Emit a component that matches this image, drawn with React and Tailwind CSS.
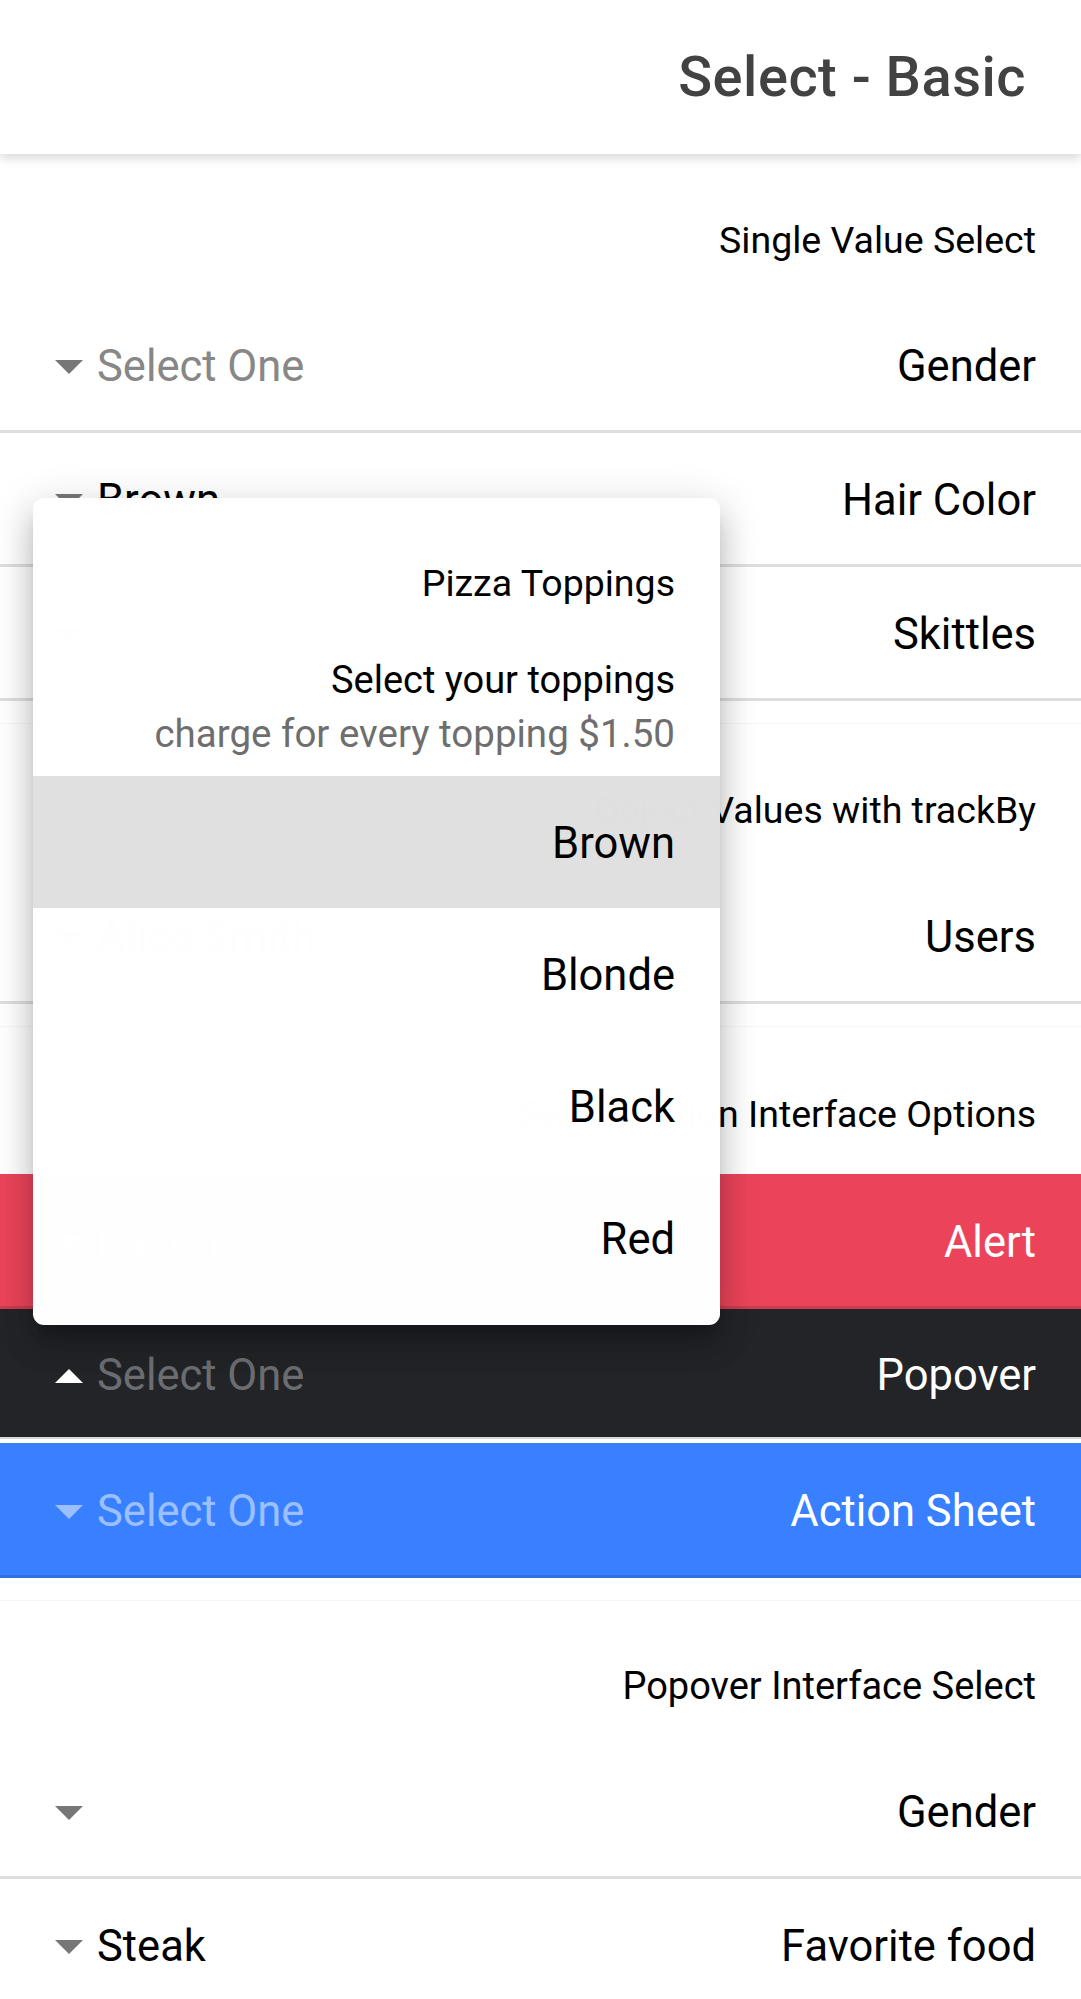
import React from 'react';

const Arrow = ({ up = false, color = '#777777' }) => (
  <svg width="28" height="14" viewBox="0 0 28 14" className="shrink-0">
    <polygon points={up ? '0,14 28,14 14,0' : '0,0 28,0 14,14'} fill={color} />
  </svg>
);

const ListHeader = ({ children, h = 'h-[123px]', size = 'text-[37.5px]' }) => (
  <div className={`${h} ${size} flex items-center justify-end pt-[5px] pr-[45px] text-black`}>
    {children}
  </div>
);

const Row = ({ label, value, placeholder, arrowColor = '#777777' }) => (
  <div className="h-[134px] flex items-center justify-between pt-[5px] pl-[55px] pr-[45px] border-b-[3px] border-[#dedede] text-[43.5px]">
    <div className="flex items-center gap-[14px]">
      <Arrow color={arrowColor} />
      {value && <span className="text-black">{value}</span>}
      {placeholder && <span className="text-[#878787]">{placeholder}</span>}
    </div>
    <span className="text-black">{label}</span>
  </div>
);

const options = ['Brown', 'Blonde', 'Black', 'Red'];

export default function App() {
  return (
    <div className="relative w-full h-[1999px] overflow-hidden bg-white font-['Roboto',sans-serif]">
      {/* Toolbar */}
      <div className="relative z-10 h-[154px] bg-white flex items-center justify-end pr-[55px] shadow-[0_4px_10px_rgba(0,0,0,0.16)]">
        <h1 className="text-[56px] font-medium text-[#424242] tracking-[0.5px]">Select - Basic</h1>
      </div>

      {/* Single value */}
      <div className="pt-[22px] pb-[22px]">
        <ListHeader>Single Value Select</ListHeader>
        <Row label="Gender" placeholder="Select One" />
        <Row label="Hair Color" value="Brown" />
        <Row label="Skittles" />
      </div>

      {/* Objects */}
      <div className="border-t border-[#f7f7f7] pt-[22px] pb-[22px]">
        <ListHeader h="h-[124px]">Object Values with trackBy</ListHeader>
        <Row label="Users" value="Alice Smith" />
      </div>

      {/* Custom interface */}
      <div className="border-t border-[#f7f7f7] pt-[22px] pb-[22px]">
        <ListHeader h="h-[125px]">Select Action Interface Options</ListHeader>
        <div className="h-[135px] bg-[#eb445a] flex items-center justify-between pt-[5px] pl-[55px] pr-[45px] border-b-[3px] border-[#cc3b4f] text-[43.5px] text-white">
          <div className="flex items-center gap-[14px]">
            <Arrow color="#ffffff" />
            <span>Bacon</span>
          </div>
          <span>Alert</span>
        </div>
        <div className="h-[130px] bg-[#222428] flex items-center justify-between pt-[5px] pl-[55px] pr-[45px] border-b-[2px] border-[#d8d8d8] text-[43.5px]">
          <div className="flex items-center gap-[14px]">
            <Arrow up color="#ffffff" />
            <span className="text-[#6c6d71]">Select One</span>
          </div>
          <span className="text-white">Popover</span>
        </div>
        <div className="mt-[4px] h-[135px] bg-[#3880ff] flex items-center justify-between pt-[5px] pl-[55px] pr-[45px] border-b-[3px] border-[#3170e0] text-[43.5px]">
          <div className="flex items-center gap-[14px]">
            <Arrow color="#9cc0ff" />
            <span className="text-[#9cc0ff]">Select One</span>
          </div>
          <span className="text-white">Action Sheet</span>
        </div>
      </div>

      {/* Popover interface */}
      <div className="border-t border-[#f7f7f7] pt-[21px] pb-[22px]">
        <ListHeader size="text-[38px]">Popover Interface Select</ListHeader>
        <Row label="Gender" />
        <Row label="Favorite food" value="Steak" />
      </div>

      {/* Popover overlay */}
      <div className="absolute left-[33px] top-[498px] z-20 w-[687px] rounded-[11px] bg-white opacity-[0.995] pt-[22px] pb-[22px] shadow-[0_14px_14px_-8px_rgba(0,0,0,0.2),0_22px_28px_3px_rgba(0,0,0,0.14),0_8px_38px_6px_rgba(0,0,0,0.12)]">
        <div className="h-[124px] flex items-center justify-end pt-[3px] pr-[45px] text-[37.5px] text-black">
          Pizza Toppings
        </div>
        <div className="h-[132px] flex flex-col justify-center items-end pb-[7px] pr-[45px]">
          <h3 className="text-[38px] leading-[54px] text-black">Select your toppings</h3>
          <p className="text-[38.5px] leading-[54px] text-[#6e6e6e]">charge for every topping $1.50</p>
        </div>
        {options.map((o, i) => (
          <div
            key={o}
            className={`h-[131.75px] flex items-center justify-end pt-[4px] pr-[45px] text-[43.5px] text-black ${i === 0 ? 'bg-[#e0e0e0]' : ''}`}
          >
            {o}
          </div>
        ))}
      </div>
    </div>
  );
}
